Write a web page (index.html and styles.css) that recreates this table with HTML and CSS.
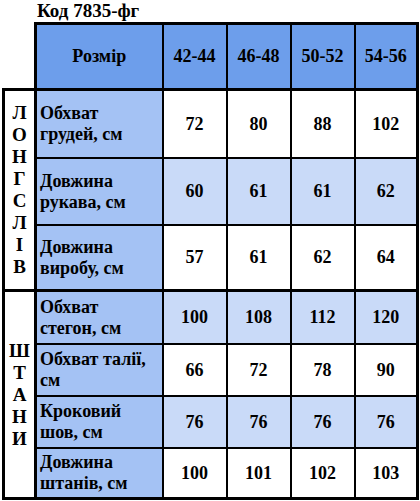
FILE: index.html
```html
<!DOCTYPE html>
<html lang="uk">
<head>
<meta charset="utf-8">
<link rel="stylesheet" href="styles.css">
</head>
<body>
<div class="title">Код 7835-фг</div>
<table class="sizes">
  <colgroup>
    <col class="c-cat"><col class="c-label"><col class="c-num"><col class="c-num"><col class="c-num"><col class="c-num-last">
  </colgroup>
  <tr class="head">
    <td class="blank"></td>
    <th class="lbl-head">Розмір</th>
    <th>42-44</th><th>46-48</th><th>50-52</th><th>54-56</th>
  </tr>
  <tr class="r1 white">
    <td class="cat cat-top" rowspan="3"><div class="vert"><span>Л</span><span>О</span><span>Н</span><span>Г</span><span>С</span><span>Л</span><span>І</span><span>В</span></div></td>
    <td class="lbl">Обхват<br>грудей, см</td>
    <td>72</td><td>80</td><td>88</td><td>102</td>
  </tr>
  <tr class="r2 light">
    <td class="lbl">Довжина<br>рукава, см</td>
    <td>60</td><td>61</td><td>61</td><td>62</td>
  </tr>
  <tr class="r3 white sec-end">
    <td class="lbl">Довжина<br>виробу, см</td>
    <td>57</td><td>61</td><td>62</td><td>64</td>
  </tr>
  <tr class="r4 light">
    <td class="cat" rowspan="4"><div class="vert"><span>Ш</span><span>Т</span><span>А</span><span>Н</span><span>И</span></div></td>
    <td class="lbl">Обхват<br>стегон, см</td>
    <td>100</td><td>108</td><td>112</td><td>120</td>
  </tr>
  <tr class="r5 white">
    <td class="lbl">Обхват талії,<br>см</td>
    <td>66</td><td>72</td><td>78</td><td>90</td>
  </tr>
  <tr class="r6 light">
    <td class="lbl">Кроковий<br>шов, см</td>
    <td>76</td><td>76</td><td>76</td><td>76</td>
  </tr>
  <tr class="r7 white">
    <td class="lbl">Довжина<br>штанів, см</td>
    <td>100</td><td>101</td><td>102</td><td>103</td>
  </tr>
</table>
</body>
</html>
```
FILE: styles.css
```css
html, body {
  margin: 0;
  padding: 0;
  background: #ffffff;
}
body {
  font-family: "Liberation Serif", "Times New Roman", serif;
  font-weight: bold;
  color: #000000;
  padding-left: 2px;
}
.title {
  font-size: 19px;
  line-height: 22px;
  height: 22px;
  padding-left: 35px;
}
.sizes {
  border-collapse: collapse;
  table-layout: fixed;
  width: 414px;
  font-size: 18px;
  line-height: 21px;
}
.c-cat { width: 32px; }
.c-label { width: 127px; }
.c-num { width: 64px; }
.c-num-last { width: 63px; }
.sizes td, .sizes th {
  border: 2px solid #000;
  padding: 0;
  text-align: center;
  vertical-align: middle;
  font-weight: bold;
}
.sizes .blank {
  border: none;
  border-right: 3px solid #000;
  background: #fff;
}
.head th {
  background: #6d9eeb;
  border-top: 3px solid #000;
  border-bottom: 3px solid #000;
  height: 63px;
}
.head th:last-child { border-right: 3px solid #000; }
.sizes td:last-child { border-right: 3px solid #000; }
.sizes .cat {
  border-left: 3px solid #000;
  border-right: 3px solid #000;
  border-top: 3px solid #000;
  border-bottom: 3px solid #000;
  background: #fff;
  font-size: 19px;
}
.vert {
  display: flex;
  flex-direction: column;
  align-items: center;
  line-height: 22px;
}
.sizes .lbl {
  background: #a4c2f4;
  text-align: left;
  padding-left: 3px;
}
.white td { background: #ffffff; }
.light td { background: #c9daf8; }
.white td.lbl, .light td.lbl { background: #a4c2f4; }
.white td.cat, .light td.cat { background: #ffffff; }
.sec-end td { border-bottom: 3px solid #000; }
.r7 td { border-bottom: 3px solid #000; }
.r1 td { height: 66px; }
.r2 td { height: 65px; }
.r3 td { height: 63px; }
.r4 td { height: 51px; }
.r5 td { height: 50px; }
.r6 td { height: 50px; }
.r7 td { height: 48px; }
```
